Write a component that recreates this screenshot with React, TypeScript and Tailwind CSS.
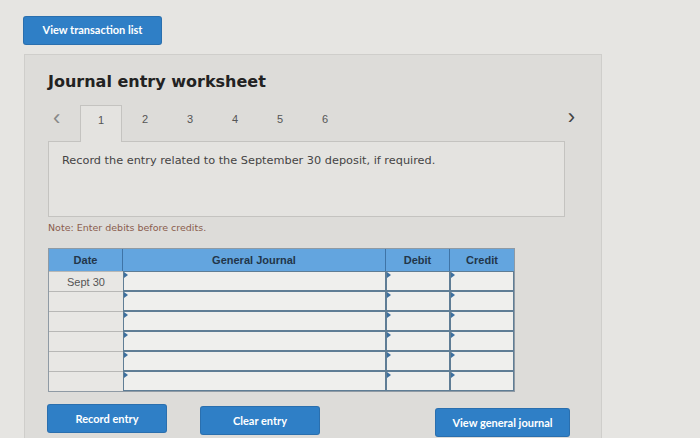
import React from "react";

const rows = [0, 1, 2, 3, 4, 5];

function Marker() {
  return (
    <span className="absolute left-0 top-0 w-0 h-0 border-t-[3px] border-b-[3px] border-l-[4px] border-t-transparent border-b-transparent border-l-[#3d6f9e]" />
  );
}

function InputCell({ w }: { w: string }) {
  return (
    <div className={`relative ${w} h-full border-[1.5px] border-[#5f7d95] bg-[#efefed]`}>
      <Marker />
    </div>
  );
}

export default function App() {
  const btn =
    "h-[27px] bg-[#2f7fc6] text-white text-[11px] font-bold flex items-center justify-center rounded-[2px] shadow-[0_0_0_1px_#2a6fae]";
  return (
    <div
      className="w-[700px] h-[438px] overflow-hidden bg-[#e6e5e2] pl-[24px] pt-[17px]"
      style={{ fontFamily: "Lato, 'Liberation Sans', sans-serif" }}
    >
      <div className={`${btn} w-[137px]`}>View transaction list</div>

      <div className="mt-[10px] w-[578px] h-[400px] border border-[#cfcecb] bg-[#dddcd9] pl-[23px] pt-[17px]">
        <h1
          className="text-[16px] leading-[20px] font-bold text-[#222]"
          style={{ fontFamily: "'DejaVu Sans', Verdana, sans-serif" }}
        >
          Journal entry worksheet
        </h1>

        <div
          className="mt-[13px] flex items-start h-[36px] w-[527px] text-[11px] text-[#555]"
          style={{ fontFamily: "'Liberation Sans', Arial, sans-serif" }}
        >
          <span className="w-[32px] pl-[5px] pt-[3px] text-[#888] text-[22px] leading-[20px] font-light">‹</span>
          <div className="w-[42px] h-[37px] border border-b-0 border-[#c4c3c0] bg-[#e4e3e0] flex justify-center pt-[6px] z-10">
            1
          </div>
          {["2", "3", "4", "5", "6"].map((n) => (
            <div key={n} className="w-[44px] flex justify-center pt-[6px] ml-[1px] first:ml-0">
              {n}
            </div>
          ))}
          <span className="ml-auto pt-[2px] text-[#444] text-[22px] leading-[20px]">›</span>
        </div>

        <div
          className="w-[517px] h-[76px] border border-[#c4c3c0] bg-[#e4e3e0] pl-[13px] pt-[11px] text-[11.3px] text-[#444]"
          style={{ fontFamily: "'DejaVu Sans', Verdana, sans-serif" }}
        >
          Record the entry related to the September 30 deposit, if required.
        </div>

        <div
          className="mt-[4px] text-[9.5px] text-[#8a5d4e]"
          style={{ fontFamily: "'DejaVu Sans', Verdana, sans-serif" }}
        >
          Note: Enter debits before credits.
        </div>

        <div
          className="mt-[13px] w-[467px] border border-[#8f9aa4]"
          style={{ fontFamily: "'Liberation Sans', Arial, sans-serif" }}
        >
          <div className="flex h-[22px] bg-[#63a5df] text-[11px] text-[#22364a] font-semibold">
            <div className="w-[74px] flex items-center justify-center border-r border-[#3f74a6]">Date</div>
            <div className="w-[263px] flex items-center justify-center border-r border-[#3f74a6]">General Journal</div>
            <div className="w-[64px] flex items-center justify-center border-r border-[#3f74a6]">Debit</div>
            <div className="flex-1 flex items-center justify-center">Credit</div>
          </div>
          {rows.map((r) => (
            <div key={r} className="flex h-[20px]">
              <div className="w-[74px] border-t border-[#b8b8b6] bg-[#e8e7e4] text-[11px] text-[#555] flex items-center justify-center">
                {r === 0 ? "Sept 30" : ""}
              </div>
              <InputCell w="w-[263px]" />
              <InputCell w="w-[64px]" />
              <InputCell w="flex-1" />
            </div>
          ))}
        </div>

        <div className="mt-[13px] flex items-start">
          <div className={`${btn} w-[118px]`}>Record entry</div>
          <div className={`${btn} w-[118px] ml-[35px] mt-[2px]`}>Clear entry</div>
          <div className={`${btn} w-[133px] ml-[117px] mt-[4px]`}>View general journal</div>
        </div>
      </div>
    </div>
  );
}
